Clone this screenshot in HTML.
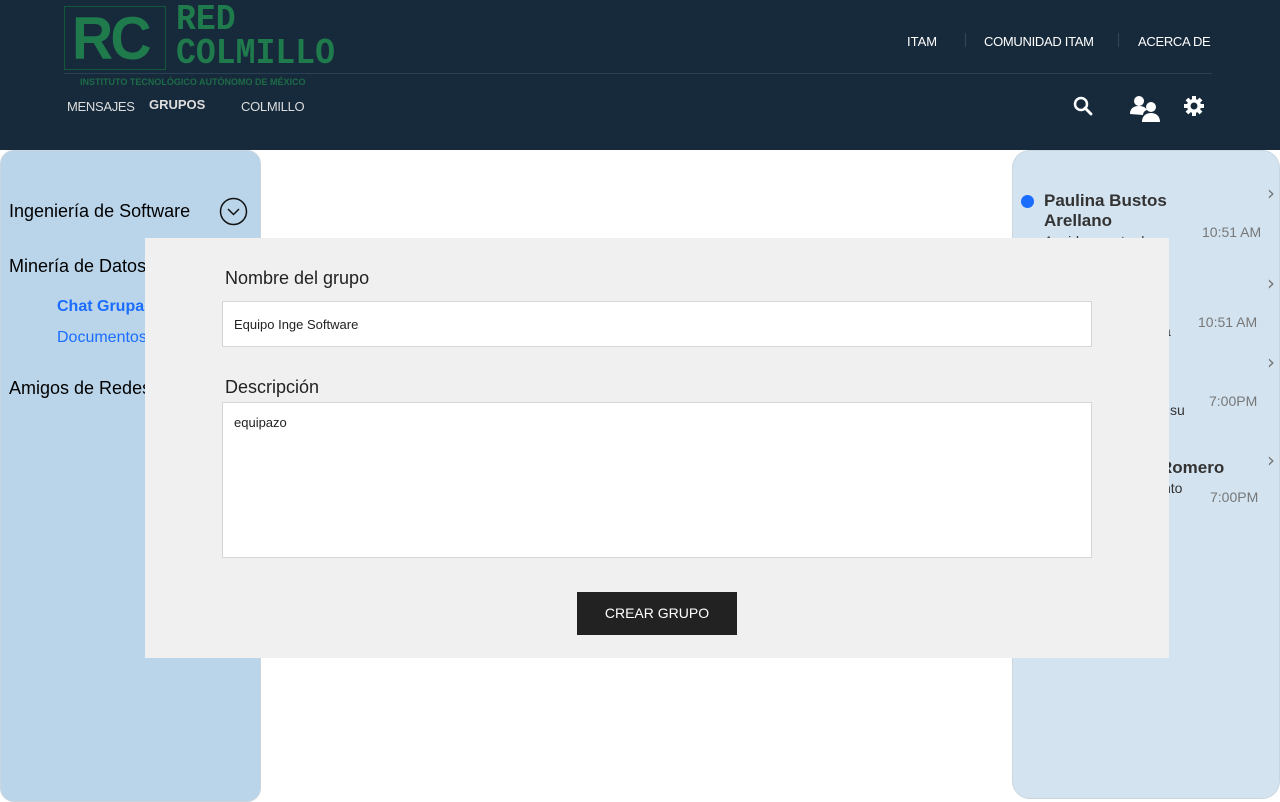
<!DOCTYPE html>
<html><head><meta charset="utf-8"><style>
*{margin:0;padding:0;box-sizing:border-box}
body{width:1280px;height:800px;background:#fff;font-family:"Liberation Sans",sans-serif;position:relative;overflow:hidden}
.hdr{position:absolute;left:0;top:0;width:1280px;height:150px;background:#172a3c}
.abs{position:absolute}
.nav{color:#fff;font-size:13px}
.left{position:absolute;left:0;top:150px;width:261px;height:652px;background:#bad5ea;border:1px solid #c9d6e0;border-radius:14px}
.right{position:absolute;left:1012px;top:150px;width:268px;height:649px;background:#d3e3f0;border:1px solid #c9d6e0;border-radius:18px}
.modal{position:absolute;left:145px;top:238px;width:1024px;height:420px;background:#f0f0f0}
.inp{position:absolute;background:#fff;border:1px solid #d6d6d6;font-size:13px;color:#222}
.g{color:#1f7a4c;font-weight:bold}
.chev{position:absolute;left:254px;color:#777;font-size:20px;font-family:"DejaVu Sans",sans-serif}
</style></head><body>
<div class="hdr">
 <div class="abs" style="left:64px;top:6px;width:102px;height:64px;border:1px solid #13583b"></div>
 <div class="abs g" style="left:72px;top:4px;font-size:60px;letter-spacing:-3px;transform:scaleX(0.95);transform-origin:left">RC</div>
 <div class="abs g" style="left:176px;top:3px;font-size:36px;line-height:34px;letter-spacing:0px;font-family:'Liberation Mono',monospace;transform:scaleX(0.92);transform-origin:left">RED<br>COLMILLO</div>
 <div class="abs" style="left:64px;top:73px;width:1148px;height:1px;background:#2a4054"></div>
 <div class="abs g" style="left:80px;top:77px;font-size:9px;color:#1c6b45">INSTITUTO TECNOLÓGICO AUTÓNOMO DE MÉXICO</div>
 <div class="abs nav" style="left:67px;top:99px;color:#ddd;font-size:13px;letter-spacing:-0.3px">MENSAJES</div>
 <div class="abs nav" style="left:149px;top:97px;font-weight:bold;color:#ddd">GRUPOS</div>
 <div class="abs nav" style="left:241px;top:99px;color:#ddd;letter-spacing:-0.3px">COLMILLO</div>
 <div class="abs nav" style="left:907px;top:34px">ITAM</div>
 <div class="abs" style="left:965px;top:33px;width:1px;height:14px;background:#33475a"></div>
 <div class="abs nav" style="left:984px;top:34px;letter-spacing:-0.3px">COMUNIDAD ITAM</div>
 <div class="abs" style="left:1118px;top:33px;width:1px;height:14px;background:#33475a"></div>
 <div class="abs nav" style="left:1138px;top:34px;letter-spacing:-0.3px">ACERCA DE</div>
 <svg class="abs" style="left:1072px;top:95px" width="22" height="22" viewBox="0 0 22 22"><circle cx="9" cy="9" r="6" fill="none" stroke="#fff" stroke-width="2.5"/><path d="M13 13l6 6" stroke="#fff" stroke-width="2.8" stroke-linecap="round"/></svg>
 <svg class="abs" style="left:1129px;top:94px" width="32" height="30" viewBox="0 0 32 30"><circle cx="10" cy="7" r="5" fill="#fff"/><path d="M1 20c0-6 4-8 9-8s7 2 8 4c-3 1-4 3-4 5z" fill="#fff"/><circle cx="22" cy="13" r="5" fill="#fff"/><path d="M13 28c0-6 4-9 9-9s9 3 9 9z" fill="#fff"/></svg>
 <svg class="abs" style="left:1183px;top:95px" width="22" height="22" viewBox="0 0 22 22"><g fill="#fff"><circle cx="11" cy="11" r="7"/><g stroke="#fff" stroke-width="4"><path d="M11 1v20M1 11h20M4 4l14 14M18 4L4 18"/></g></g><circle cx="11" cy="11" r="3.5" fill="#172a3c"/></svg>
</div>
<div class="left">
 <div class="abs" style="left:8px;top:50px;font-size:18px">Ingeniería de Software</div>
 <svg class="abs" style="left:218px;top:46px" width="29" height="29"><circle cx="14.5" cy="14.5" r="13" fill="none" stroke="#111" stroke-width="1.5"/><path d="M9 12l5.5 5.5L20 12" fill="none" stroke="#111" stroke-width="1.5"/></svg>
 <div class="abs" style="left:8px;top:105px;font-size:18px">Minería de Datos</div>
 <div class="abs" style="left:56px;top:147px;font-size:16px;font-weight:bold;color:#1a6dff">Chat Grupal</div>
 <div class="abs" style="left:56px;top:178px;font-size:16px;color:#1a6dff">Documentos</div>
 <div class="abs" style="left:8px;top:227px;font-size:18px">Amigos de Redes</div>
</div>
<div class="right">
 <div class="abs" style="left:8px;top:44px;width:13px;height:13px;border-radius:50%;background:#1a6dff"></div>
 <div class="abs" style="left:31px;top:40px;font-size:17px;font-weight:bold;color:#333;line-height:20px">Paulina Bustos<br>Arellano</div>
 <div class="abs" style="left:31px;top:82px;font-size:14px;color:#333">Acaido cuenta de</div>
 <div class="abs" style="left:189px;top:73px;font-size:14px;color:#777">10:51 AM</div>
 <div class="chev" style="top:30px">›</div>
 <div class="chev" style="top:120px">›</div>
 <div class="abs" style="left:150px;top:172px;font-size:14px;color:#333">a</div>
 <div class="abs" style="left:185px;top:163px;font-size:14px;color:#777">10:51 AM</div>
 <div class="chev" style="top:199px">›</div>
 <div class="abs" style="left:157px;top:251px;font-size:14px;color:#333">su</div>
 <div class="abs" style="left:196px;top:242px;font-size:14px;color:#777">7:00PM</div>
 <div class="chev" style="top:297px">›</div>
 <div class="abs" style="left:147px;top:307px;font-size:17px;font-weight:bold;color:#333">Romero</div>
 <div class="abs" style="left:150px;top:329px;font-size:14px;color:#333">nto</div>
 <div class="abs" style="left:197px;top:338px;font-size:14px;color:#777">7:00PM</div>
</div>
<div class="modal">
 <div class="abs" style="left:80px;top:30px;font-size:18px;color:#222">Nombre del grupo</div>
 <div class="inp" style="left:77px;top:63px;width:870px;height:46px;padding:15px 11px">Equipo Inge Software</div>
 <div class="abs" style="left:80px;top:139px;font-size:18px;color:#222">Descripción</div>
 <div class="inp" style="left:77px;top:164px;width:870px;height:156px;padding:12px 11px">equipazo</div>
 <div class="abs" style="left:432px;top:354px;width:160px;height:43px;background:#222;color:#fff;font-size:14px;text-align:center;line-height:43px">CREAR GRUPO</div>
</div>
</body></html>
